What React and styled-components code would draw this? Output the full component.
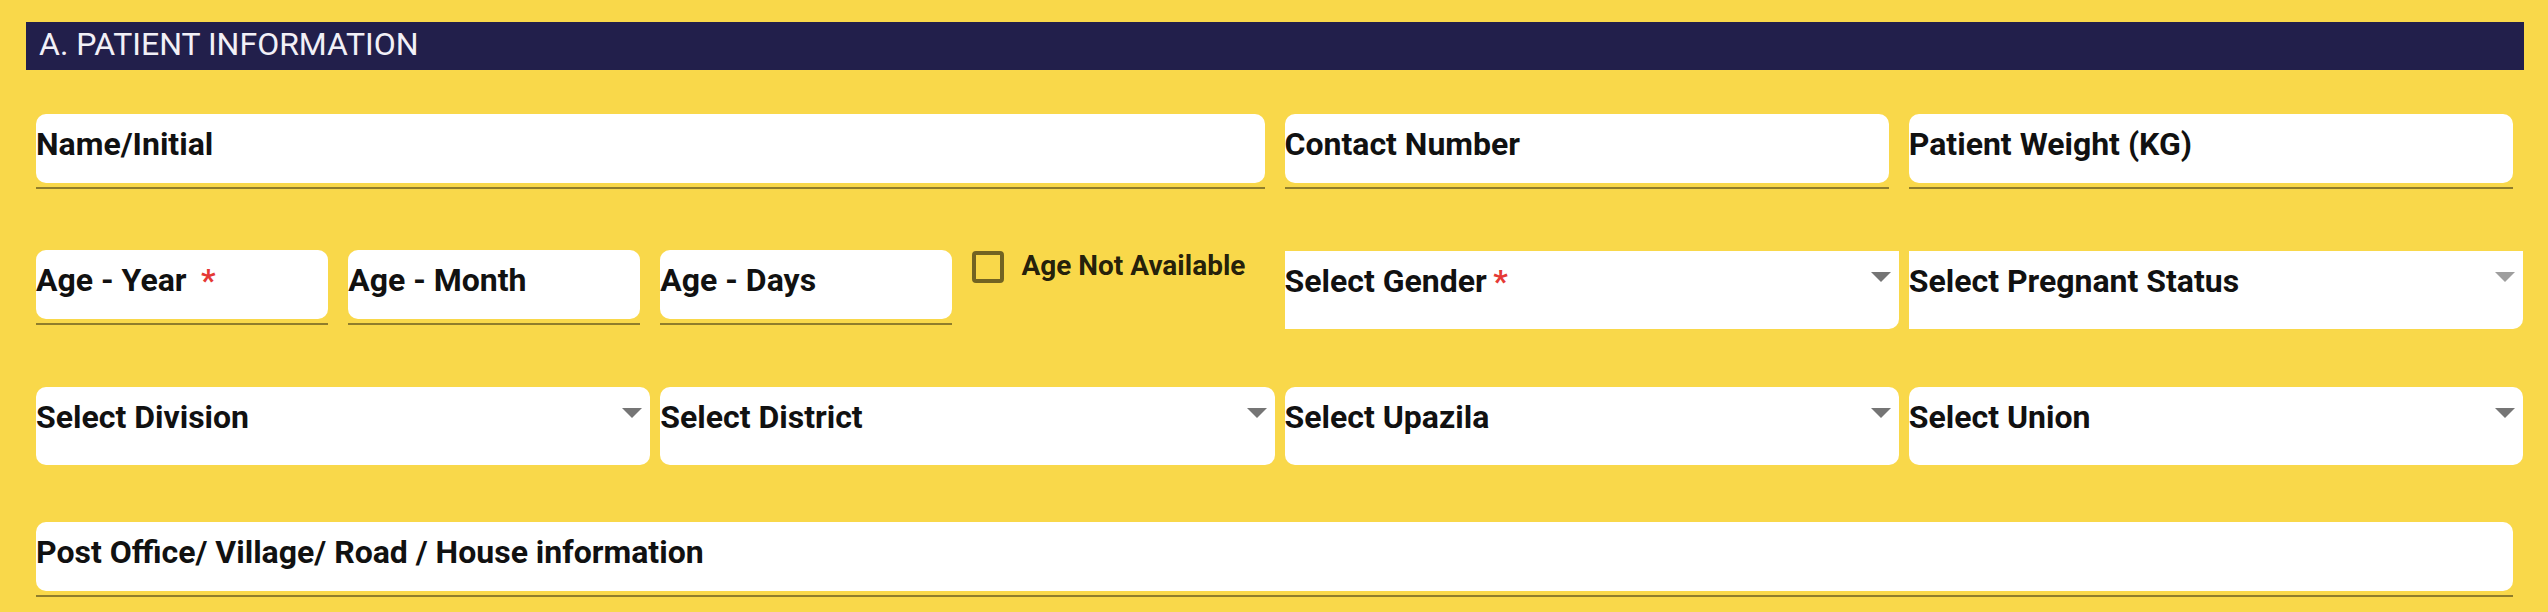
import React from "react";
import styled, { createGlobalStyle } from "styled-components";

const GlobalStyle = createGlobalStyle`
  html, body {
    margin: 0;
    padding: 0;
    background: #F9D84A;
  }
  body {
    font-family: Roboto, "Liberation Sans", Arial, sans-serif;
  }
`;

const Page = styled.div`
  box-sizing: border-box;
  height: 612px;
  overflow: hidden;
  padding: 22px 15px 0 26px;
  background: #F9D84A;
`;

const SectionHeader = styled.h2`
  margin: 0 9px 0 0;
  height: 48px;
  box-sizing: border-box;
  padding: 4px 13px 0;
  background: #221F4B;
  color: #F2F0F7;
  font-family: Roboto, sans-serif;
  font-weight: 400;
  font-size: 32px;
  line-height: 1.17;
  text-transform: uppercase;
`;

const FormGrid = styled.div`
  display: grid;
  grid-template-columns: repeat(8, minmax(0, 1fr));
  grid-template-rows: repeat(3, 136px) auto;
  margin: 44px 0 0 10px;
`;

const Cell = styled.div`
  grid-column: span ${(p) => p.$span};
  padding-right: ${(p) => (p.$select ? 10 : 20)}px;
  min-width: 0;
`;

const FieldWrap = styled.div`
  border-bottom: 2px solid rgba(0, 0, 0, 0.42);
  padding-bottom: 4px;
`;

const FieldBox = styled.div`
  height: 69px;
  box-sizing: border-box;
  background: #ffffff;
  border-radius: 10px;
  padding-top: 12px;
`;

const Label = styled.span`
  font-family: Roboto, sans-serif;
  font-size: 32px;
  font-weight: 700;
  color: #111111;
  line-height: 1.17;
  white-space: nowrap;
`;

const Req = styled.span`
  color: #E53935;
`;

const SelectBox = styled.div`
  display: flex;
  justify-content: space-between;
  align-items: flex-start;
  margin-top: 1px;
  height: 78px;
  box-sizing: border-box;
  background: #ffffff;
  padding-top: 12px;
  border-radius: ${(p) => (p.$square ? "0 0 10px 0" : "10px")};
`;

const Arrow = styled.span`
  flex: none;
  width: 0;
  height: 0;
  margin: 9px 8px 0 0;
  border-left: 10px solid transparent;
  border-right: 10px solid transparent;
  border-top: 10px solid ${(p) => (p.$disabled ? "#9E9E9E" : "#757575")};
`;

const CheckRow = styled.label`
  display: flex;
  align-items: flex-start;
  gap: 17px;
  margin-top: 1px;
  cursor: pointer;
`;

const CheckBox = styled.span`
  flex: none;
  width: 32px;
  height: 32px;
  box-sizing: border-box;
  border: 4px solid rgba(0, 0, 0, 0.54);
  border-radius: 4px;
`;

const CheckText = styled.span`
  font-family: Roboto, sans-serif;
  font-size: 28px;
  font-weight: 700;
  color: rgba(0, 0, 0, 0.87);
  line-height: 1.1;
  white-space: nowrap;
`;

function TextField({ span, label, required, reqGap }) {
  return (
    <Cell $span={span}>
      <FieldWrap>
        <FieldBox>
          <Label>
            {label}
            {required && <Req>{reqGap ? " \u2009*" : "\u2009*"}</Req>}
          </Label>
        </FieldBox>
      </FieldWrap>
    </Cell>
  );
}

function SelectField({ span, label, required, square, disabled }) {
  return (
    <Cell $span={span} $select>
      <SelectBox $square={square}>
        <Label>
          {label}
          {required && <Req>{"\u2009*"}</Req>}
        </Label>
        <Arrow $disabled={disabled} />
      </SelectBox>
    </Cell>
  );
}

export default function App() {
  return (
    <>
      <GlobalStyle />
      <Page>
        <SectionHeader>A. Patient Information</SectionHeader>
        <FormGrid>
          <TextField span={4} label="Name/Initial" />
          <TextField span={2} label="Contact Number" />
          <TextField span={2} label="Patient Weight (KG)" />

          <TextField span={1} label="Age - Year" required reqGap />
          <TextField span={1} label="Age - Month" />
          <TextField span={1} label="Age - Days" />
          <Cell $span={1}>
            <CheckRow>
              <CheckBox />
              <CheckText>Age Not Available</CheckText>
            </CheckRow>
          </Cell>
          <SelectField span={2} label="Select Gender" required square />
          <SelectField span={2} label="Select Pregnant Status" square disabled />

          <SelectField span={2} label="Select Division" />
          <SelectField span={2} label="Select District" />
          <SelectField span={2} label="Select Upazila" />
          <SelectField span={2} label="Select Union" />

          <TextField span={8} label="Post Office/ Village/ Road / House information" />
        </FormGrid>
      </Page>
    </>
  );
}
